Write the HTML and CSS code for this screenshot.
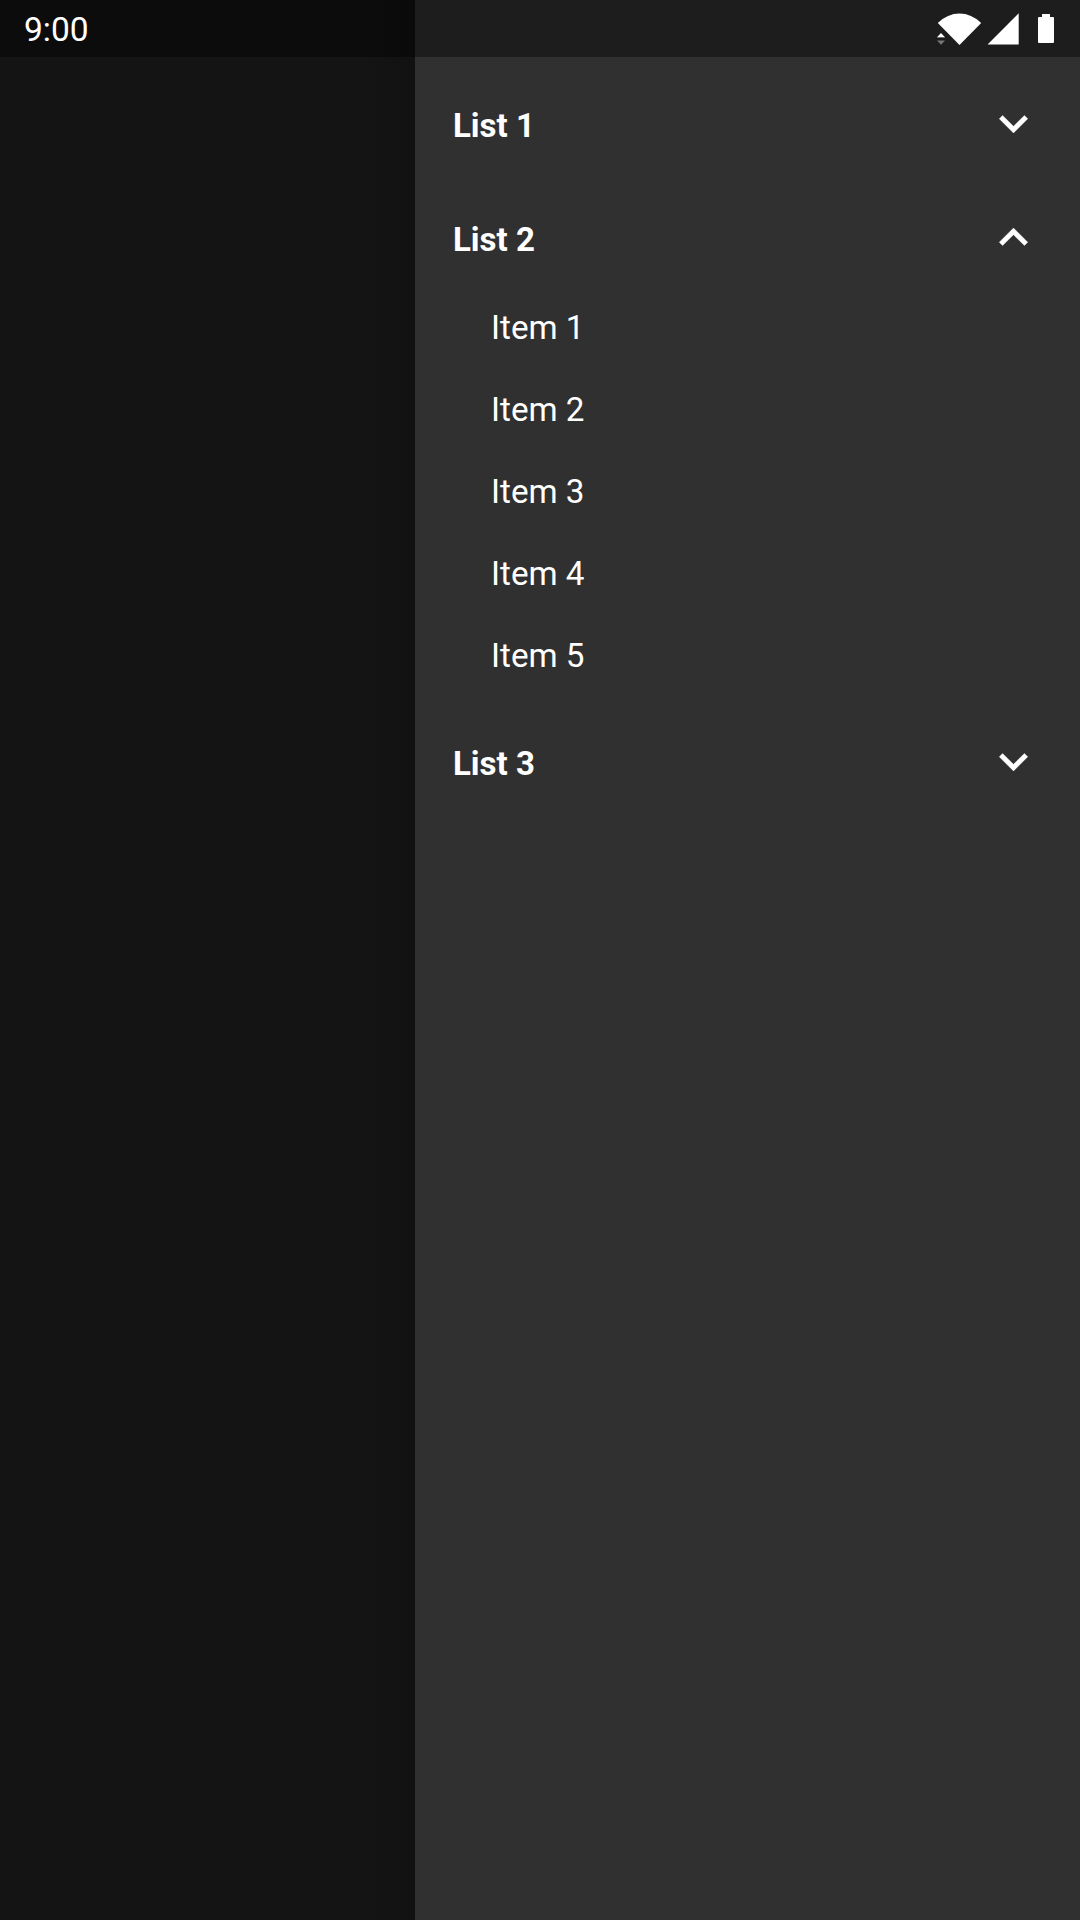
FILE: index.html
```html
<!DOCTYPE html>
<html lang="en">
<head>
<meta charset="utf-8">
<title>Navigation drawer</title>
<link rel="stylesheet" href="styles.css">
</head>
<body>
<div class="screen">
  <header class="status">
    <span class="clock">9:00</span>
    <svg class="indicators" width="160" height="57" viewBox="920 0 160 57">
      <path fill="#fff" d="M937.8 23Q947.5 13.5 959.5 13.5T981.2 23L959.5 45Z"/>
      <path fill="#fff" d="M937 37.3L941 33L945 37.3Z"/>
      <path fill="#777" d="M937 37.3H945V38H937ZM937 40.5H945L941 44.8Z"/>
      <path fill="#fff" d="M1018.7 13.2V44.6H987.6Z"/>
      <path fill="#fff" d="M1042 14H1050V17H1053Q1054 17 1054 18V42Q1054 43 1053 43H1039Q1038 43 1038 42V18Q1038 17 1039 17H1042Z"/>
    </svg>
  </header>
  <main class="content">
    <div class="scrim"></div>
    <nav class="drawer">
      <section class="group">
        <h2 class="heading">List 1 <svg class="chevron" viewBox="0 0 24 24"><path d="M16.59 8.59L12 13.17 7.41 8.59 6 10l6 6 6-6z"/></svg></h2>
      </section>
      <section class="group">
        <h2 class="heading">List 2 <svg class="chevron" viewBox="0 0 24 24"><path d="M12 8l-6 6 1.41 1.41L12 10.83l4.59 4.58L18 14z"/></svg></h2>
        <ul class="items">
          <li>Item 1</li>
          <li>Item 2</li>
          <li>Item 3</li>
          <li>Item 4</li>
          <li>Item 5</li>
        </ul>
      </section>
      <section class="group">
        <h2 class="heading">List 3 <svg class="chevron" viewBox="0 0 24 24"><path d="M16.59 8.59L12 13.17 7.41 8.59 6 10l6 6 6-6z"/></svg></h2>
      </section>
    </nav>
  </main>
</div>
</body>
</html>
```
FILE: styles.css
```css
body { margin: 0; font-family: Roboto, sans-serif; color: #fff; }
.screen { width: 1080px; height: 1920px; display: flex; flex-direction: column; }
.status { height: 57px; display: flex; justify-content: space-between; align-items: center; background: linear-gradient(90deg, #0c0c0c 370px, #0a0a0a 415px, #1d1d1d 415px); }
.clock { padding: 3px 0 0 24px; font-size: 33.5px; line-height: 40px; }
.indicators { display: block; }
.content { flex: 1; display: flex; }
.scrim { width: 415px; background: linear-gradient(90deg, #141414 370px, #111 415px); }
.drawer { flex: 1; background: #303030; padding-top: 11px; }
.heading { margin: 0; height: 114px; box-sizing: border-box; padding: 1px 38px 0 38px; display: flex; justify-content: space-between; align-items: center; font-size: 33px; line-height: 39px; font-weight: 700; }
.chevron { width: 57px; height: 57px; margin-bottom: 4px; fill: #fff; stroke: #fff; stroke-width: 0.15; }
.items { list-style: none; margin: -10px 0 10px; padding: 0 0 0 76px; }
.items li { height: 82px; box-sizing: border-box; padding-top: 1px; display: flex; align-items: center; font-size: 33.2px; line-height: 39px; }
```
